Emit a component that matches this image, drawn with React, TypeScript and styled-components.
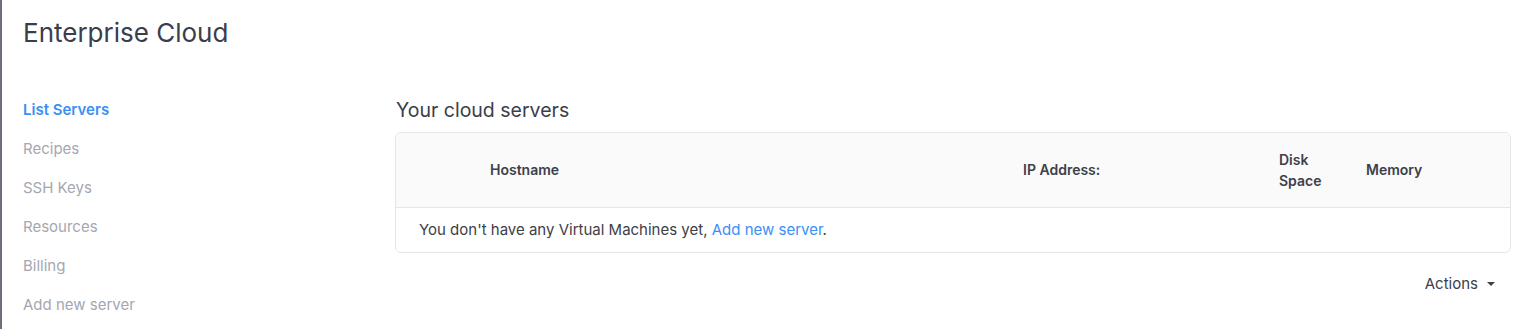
import React from "react";
import styled, { createGlobalStyle } from "styled-components";

const GlobalStyle = createGlobalStyle`
    body {
        margin: 0;
        background: #ffffff;
        font-family: Inter, "Noto Sans", Arial, sans-serif;
        color: #3d4049;
    }
`;

type NavItem = { label: string; active?: boolean };

const navItems: NavItem[] = [
    { label: "List Servers", active: true },
    { label: "Recipes" },
    { label: "SSH Keys" },
    { label: "Resources" },
    { label: "Billing" },
    { label: "Add new server" },
];

const Page = styled.div`
    min-height: 329px;
    box-sizing: border-box;
    border-left: 2px solid #6d707a;
    padding: 15px 6px 0 21px;
`;

const Title = styled.h1`
    margin: 0;
    font-size: 26px;
    line-height: 36px;
    font-weight: 400;
    color: #3b3e4a;
`;

const Layout = styled.div`
    display: grid;
    grid-template-columns: 372px 1fr;
    margin-top: 38px;
`;

const Nav = styled.nav`
    display: flex;
    flex-direction: column;
    padding-top: 1px;
`;

const NavLink = styled.a<{ $active?: boolean }>`
    display: block;
    font-size: 15px;
    line-height: 39px;
    font-weight: ${props => (props.$active ? 600 : 400)};
    color: ${props => (props.$active ? "#3b8ff6" : "#a5a7b0")};
    text-decoration: none;
    cursor: pointer;
`;

const Main = styled.section`
    padding-top: 9px;
`;

const Heading = styled.h2`
    margin: 0 0 10px 1px;
    font-size: 19.5px;
    line-height: 24px;
    font-weight: 400;
    color: #3b3e4a;
`;

const Card = styled.div`
    border: 1px solid #e6e6e8;
    border-radius: 6px;
    overflow: hidden;
`;

const Table = styled.table`
    width: 100%;
    border-collapse: collapse;
    table-layout: fixed;
`;

const HeadRow = styled.tr`
    background: #fafafa;
    height: 74px;
    border-bottom: 1px solid #e6e6e8;
`;

const HeadCell = styled.th<{ $width?: number }>`
    box-sizing: border-box;
    width: ${props => (props.$width ? `${props.$width}px` : "auto")};
    padding: 0 15px;
    text-align: left;
    vertical-align: middle;
    font-size: 14px;
    line-height: 21px;
    font-weight: 600;
    color: #3d4049;
`;

const EmptyCell = styled.td`
    height: 44px;
    padding: 0 23px;
    font-size: 15px;
    color: #3d4049;
`;

const Link = styled.a`
    color: #3b8ff6;
    text-decoration: none;
    cursor: pointer;
`;

const Footer = styled.div`
    display: flex;
    justify-content: flex-end;
    padding: 20px 16px 0 0;
`;

const DropdownButton = styled.button`
    display: flex;
    align-items: center;
    gap: 9px;
    border: none;
    background: none;
    padding: 0;
    font-family: inherit;
    font-size: 15px;
    line-height: 22px;
    color: #3d4049;
    cursor: pointer;

    &::after {
        content: "";
        border-top: 4px solid #3d4049;
        border-left: 4px solid transparent;
        border-right: 4px solid transparent;
    }
`;

export default function App() {
    return (
        <>
            <GlobalStyle />
            <Page>
                <Title>Enterprise Cloud</Title>
                <Layout>
                    <Nav>
                        {navItems.map(item => (
                            <NavLink key={item.label} $active={item.active}>
                                {item.label}
                            </NavLink>
                        ))}
                    </Nav>
                    <Main>
                        <Heading>Your cloud servers</Heading>
                        <Card>
                            <Table>
                                <thead>
                                    <HeadRow>
                                        <HeadCell $width={79} />
                                        <HeadCell $width={533}>Hostname</HeadCell>
                                        <HeadCell $width={256}>IP Address:</HeadCell>
                                        <HeadCell $width={87}>Disk Space</HeadCell>
                                        <HeadCell>Memory</HeadCell>
                                    </HeadRow>
                                </thead>
                                <tbody>
                                    <tr>
                                        <EmptyCell colSpan={5}>
                                            You don't have any Virtual Machines yet,{" "}
                                            <Link>Add new server</Link>.
                                        </EmptyCell>
                                    </tr>
                                </tbody>
                            </Table>
                        </Card>
                        <Footer>
                            <DropdownButton>Actions</DropdownButton>
                        </Footer>
                    </Main>
                </Layout>
            </Page>
        </>
    );
}
